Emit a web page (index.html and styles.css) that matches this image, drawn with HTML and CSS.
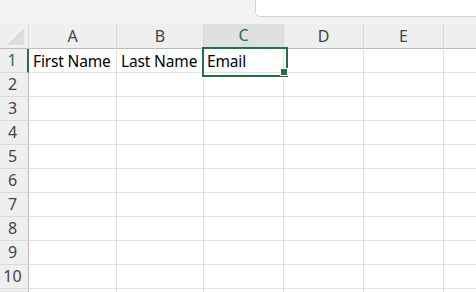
FILE: index.html
```html
<!DOCTYPE html>
<html lang="en">
<head>
  <meta charset="UTF-8">
  <title>Sheet1</title>
  <link rel="stylesheet" href="styles.css">
</head>
<body>
  <div class="topbar">
    <div class="formula-box"></div>
  </div>

  <div class="sheet">
    <!-- cabeçalho das colunas -->
    <div class="corner">
      <svg width="18" height="17" viewBox="0 0 18 17"><polygon points="17,0 17,17 0,17" fill="#dcdcdc"/></svg>
    </div>
    <div class="col-head">A</div>
    <div class="col-head">B</div>
    <div class="col-head selected">C</div>
    <div class="col-head">D</div>
    <div class="col-head">E</div>
    <div class="col-head last"></div>

    <!-- linha 1 -->
    <div class="row-head selected">1</div>
    <div class="cell">First Name</div>
    <div class="cell">Last Name</div>
    <div class="cell active">Email<span class="handle"></span></div>
    <div class="cell"></div>
    <div class="cell"></div>
    <div class="cell last"></div>

    <div class="row-head">2</div><div class="cell"></div><div class="cell"></div><div class="cell"></div><div class="cell"></div><div class="cell"></div><div class="cell last"></div>
    <div class="row-head">3</div><div class="cell"></div><div class="cell"></div><div class="cell"></div><div class="cell"></div><div class="cell"></div><div class="cell last"></div>
    <div class="row-head">4</div><div class="cell"></div><div class="cell"></div><div class="cell"></div><div class="cell"></div><div class="cell"></div><div class="cell last"></div>
    <div class="row-head">5</div><div class="cell"></div><div class="cell"></div><div class="cell"></div><div class="cell"></div><div class="cell"></div><div class="cell last"></div>
    <div class="row-head">6</div><div class="cell"></div><div class="cell"></div><div class="cell"></div><div class="cell"></div><div class="cell"></div><div class="cell last"></div>
    <div class="row-head">7</div><div class="cell"></div><div class="cell"></div><div class="cell"></div><div class="cell"></div><div class="cell"></div><div class="cell last"></div>
    <div class="row-head">8</div><div class="cell"></div><div class="cell"></div><div class="cell"></div><div class="cell"></div><div class="cell"></div><div class="cell last"></div>
    <div class="row-head">9</div><div class="cell"></div><div class="cell"></div><div class="cell"></div><div class="cell"></div><div class="cell"></div><div class="cell last"></div>
    <div class="row-head">10</div><div class="cell"></div><div class="cell"></div><div class="cell"></div><div class="cell"></div><div class="cell"></div><div class="cell last"></div>
    <div class="row-head"></div><div class="cell"></div><div class="cell"></div><div class="cell"></div><div class="cell"></div><div class="cell"></div><div class="cell last"></div>
  </div>
</body>
</html>
```

FILE: styles.css
```css
* {
  box-sizing: border-box;
}
body {
  margin: 0;
  background: #fff;
  font-family: 'Noto Sans', sans-serif;
  overflow: hidden;
}
/* barra superior */
.topbar {
  height: 24px;
  background: #f3f3f3;
  display: flex;
  justify-content: flex-end;
}
.formula-box {
  width: 221px;
  height: 17px;
  background: #fff;
  border-left: 1px solid #d4d4d4;
  border-bottom: 1px solid #d4d4d4;
  border-bottom-left-radius: 5px;
}
/* grade da planilha */
.sheet {
  display: grid;
  grid-template-columns: 29px 88px 87px 80px 80px 80px 1fr;
  grid-auto-rows: 24px;
  grid-template-rows: 25px;
}
.corner {
  background: #efefef;
  border-right: 1px solid #dadada;
  border-bottom: 1px solid #bcbcbc;
  display: flex;
  align-items: flex-end;
  justify-content: flex-end;
  padding: 0 3px 3px 0;
}
.corner svg {
  display: block;
}
.col-head {
  background: #efefef;
  border-right: 1px solid #d8d8d8;
  border-bottom: 1px solid #bcbcbc;
  color: #444;
  font-size: 16px;
  text-align: center;
  line-height: 24px;
}
.col-head.selected {
  background: #e0e0e0;
  color: #217346;
  border-bottom: 2px solid #217346;
  line-height: 23px;
}
.row-head {
  background: #efefef;
  border-right: 1px solid #bcbcbc;
  border-bottom: 1px solid #dadada;
  color: #444;
  font-size: 16px;
  text-align: center;
  padding-right: 3px;
  line-height: 23px;
}
.row-head.selected {
  color: #217346;
  border-right: 2px solid #217346;
}
.cell {
  border-right: 1px solid #e1e1e1;
  border-bottom: 1px solid #e1e1e1;
  font-size: 15.5px;
  letter-spacing: -0.15px;
  color: #000;
  line-height: 22px;
  padding-top: 1px;
  padding-left: 4px;
  white-space: nowrap;
}
.last {
  border-right: none;
}
/* célula ativa */
.cell.active {
  position: relative;
  padding-left: 3px;
}
.cell.active::after {
  content: "";
  position: absolute;
  left: -2px;
  top: -2px;
  width: 82px;
  height: 26px;
  border: 2px solid #217346;
}
.handle {
  position: absolute;
  left: 77px;
  top: 20px;
  width: 6px;
  height: 6px;
  background: #217346;
  outline: 1px solid #fff;
  z-index: 1;
}
```
